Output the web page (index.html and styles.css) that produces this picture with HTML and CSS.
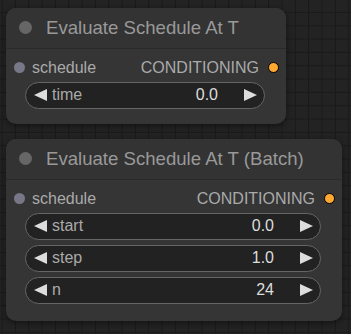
FILE: index.html
```html
<!DOCTYPE html>
<html lang="en">
<head>
    <meta charset="UTF-8">
    <meta name="viewport" content="width=device-width, initial-scale=1.0">
    <title>Evaluate Schedule At T</title>
    <link rel="stylesheet" href="styles.css">
</head>
<body>
    <div class="canvas">
        <!-- node 1 -->
        <div class="node node-single">
            <div class="node-title">
                <span class="title-dot"></span>
                <span class="title-text">Evaluate Schedule At T</span>
            </div>
            <div class="node-body">
                <div class="slots">
                    <div class="slot slot-in"><span class="dot dot-in"></span>schedule</div>
                    <div class="slot slot-out">CONDITIONING<span class="dot dot-out"></span></div>
                </div>
                <div class="widgets">
                    <div class="widget">
                        <svg class="arrow" width="13" height="12" viewBox="0 0 13 12"><polygon points="0,6 13,0 13,12"/></svg>
                        <span class="w-label">time</span>
                        <span class="w-value">0.0</span>
                        <svg class="arrow" width="13" height="12" viewBox="0 0 13 12"><polygon points="13,6 0,0 0,12"/></svg>
                    </div>
                </div>
            </div>
        </div>

        <!-- node 2 -->
        <div class="node node-batch">
            <div class="node-title">
                <span class="title-dot"></span>
                <span class="title-text">Evaluate Schedule At T (Batch)</span>
            </div>
            <div class="node-body">
                <div class="slots">
                    <div class="slot slot-in"><span class="dot dot-in"></span>schedule</div>
                    <div class="slot slot-out">CONDITIONING<span class="dot dot-out"></span></div>
                </div>
                <div class="widgets">
                    <div class="widget">
                        <svg class="arrow" width="13" height="12" viewBox="0 0 13 12"><polygon points="0,6 13,0 13,12"/></svg>
                        <span class="w-label">start</span>
                        <span class="w-value">0.0</span>
                        <svg class="arrow" width="13" height="12" viewBox="0 0 13 12"><polygon points="13,6 0,0 0,12"/></svg>
                    </div>
                    <div class="widget">
                        <svg class="arrow" width="13" height="12" viewBox="0 0 13 12"><polygon points="0,6 13,0 13,12"/></svg>
                        <span class="w-label">step</span>
                        <span class="w-value">1.0</span>
                        <svg class="arrow" width="13" height="12" viewBox="0 0 13 12"><polygon points="13,6 0,0 0,12"/></svg>
                    </div>
                    <div class="widget">
                        <svg class="arrow" width="13" height="12" viewBox="0 0 13 12"><polygon points="0,6 13,0 13,12"/></svg>
                        <span class="w-label">n</span>
                        <span class="w-value">24</span>
                        <svg class="arrow" width="13" height="12" viewBox="0 0 13 12"><polygon points="13,6 0,0 0,12"/></svg>
                    </div>
                </div>
            </div>
        </div>
    </div>
</body>
</html>
```

FILE: styles.css
```css
body {
    margin: 0;
    font-family: "Liberation Sans", Arial, sans-serif;
    background: #222;
}
.canvas {
    width: 351px;
    height: 334px;
    overflow: hidden;
    box-sizing: border-box;
    padding: 8px 0 0 6px;
    background-color: #232323;
    background-image:
        linear-gradient(to right, #191919 1px, transparent 1px),
        linear-gradient(to bottom, #191919 1px, transparent 1px);
    background-size: 13.333px 13.333px;
    background-position: 1.6px -1.4px;
}
.node {
    background: #353535;
    border-radius: 10px;
    box-shadow: 0 2px 6px rgba(0, 0, 0, 0.45);
    overflow: hidden;
}
.node-single {
    width: 280px;
}
.node-batch {
    width: 336px;
    margin-top: 15px;
}
.node-title {
    height: 40px;
    display: flex;
    align-items: center;
    background: #333;
    border-bottom: 1px solid #2a2a2a;
    padding-left: 13px;
}
.title-dot {
    width: 13px;
    height: 13px;
    border-radius: 50%;
    background: #666;
    margin-right: 14px;
    margin-top: -1px;
}
.title-text {
    color: #999;
    font-size: 18.6px;
}
.node-body {
    padding: 5px 21px 15.5px 19px;
}
.node-batch .node-body {
    padding-bottom: 17px;
}
.slots {
    height: 27px;
    display: flex;
    justify-content: space-between;
    align-items: center;
    margin: 0 -21px 0 -19px;
    font-size: 16px;
    color: #aaa;
}
.slot {
    display: flex;
    align-items: center;
}
.dot {
    width: 11px;
    height: 11px;
    border-radius: 50%;
    box-sizing: border-box;
}
.dot-in {
    background: #778;
    margin: 0 7px 0 8px;
}
.dot-out {
    background: #ffa931;
    border: 1px solid #000;
    margin: 0 7px 0 9px;
}
.widgets {
    margin-top: 1px;
    display: flex;
    flex-direction: column;
    gap: 5.33px;
}
.widget {
    height: 26.67px;
    box-sizing: border-box;
    background: #222;
    border: 1px solid #666;
    border-radius: 14px;
    display: flex;
    align-items: center;
    padding: 0 7px 0 8px;
    font-size: 16px;
}
.arrow {
    fill: #ddd;
    flex: none;
}
.w-label {
    color: #aaa;
    margin-left: 5px;
    flex: 1;
}
.w-value {
    color: #ddd;
    margin-right: 26px;
}
```
